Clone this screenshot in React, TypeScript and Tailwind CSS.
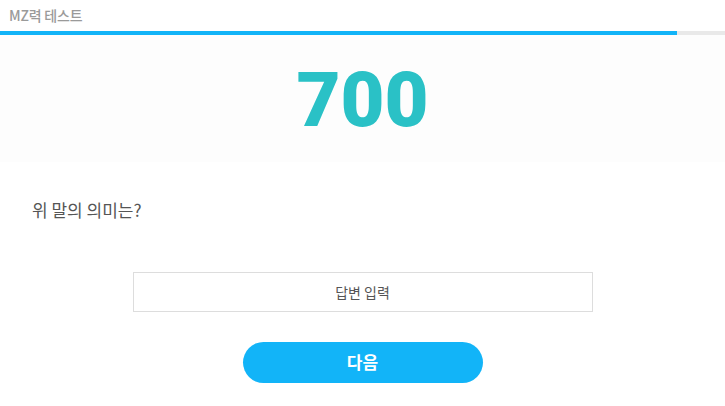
const App = () => {
  return (
    <div
      className="w-[725px] h-[406px] bg-white overflow-hidden"
      style={{ fontFamily: '"Noto Sans CJK KR", "Noto Sans", sans-serif' }}
    >
      <header className="h-[31px] flex items-center px-[9px]">
        <span className="text-[14px] font-medium text-[#9a9a9a] tracking-[-0.2px]">MZ력 테스트</span>
      </header>
      <div className="h-[4px] w-full bg-[#e9e9e9]">
        <div className="h-full w-[677px] bg-[#12b4f8]" />
      </div>

      <div className="h-[127px] bg-[#fdfdfd] flex items-center justify-center">
        <span
          className="text-[76px] font-black leading-none text-[#2ac1c6] mt-[3px]"
          style={{ fontFamily: 'Roboto, sans-serif' }}
        >
          700
        </span>
      </div>

      <p className="mt-[35px] px-[32px] text-[17px] text-[#555]">위 말의 의미는?</p>

      <div className="mt-[49px] flex justify-center">
        <input
          placeholder="답변 입력"
          className="w-[460px] h-[40px] border border-[#dddddd] text-center text-[14px] placeholder:text-[#555] outline-none"
        />
      </div>

      <div className="mt-[30px] flex justify-center">
        <button className="w-[240px] h-[41px] rounded-full bg-[#12b4f8] text-white text-[17px] font-bold">
          다음
        </button>
      </div>
    </div>
  );
};

export default App;
